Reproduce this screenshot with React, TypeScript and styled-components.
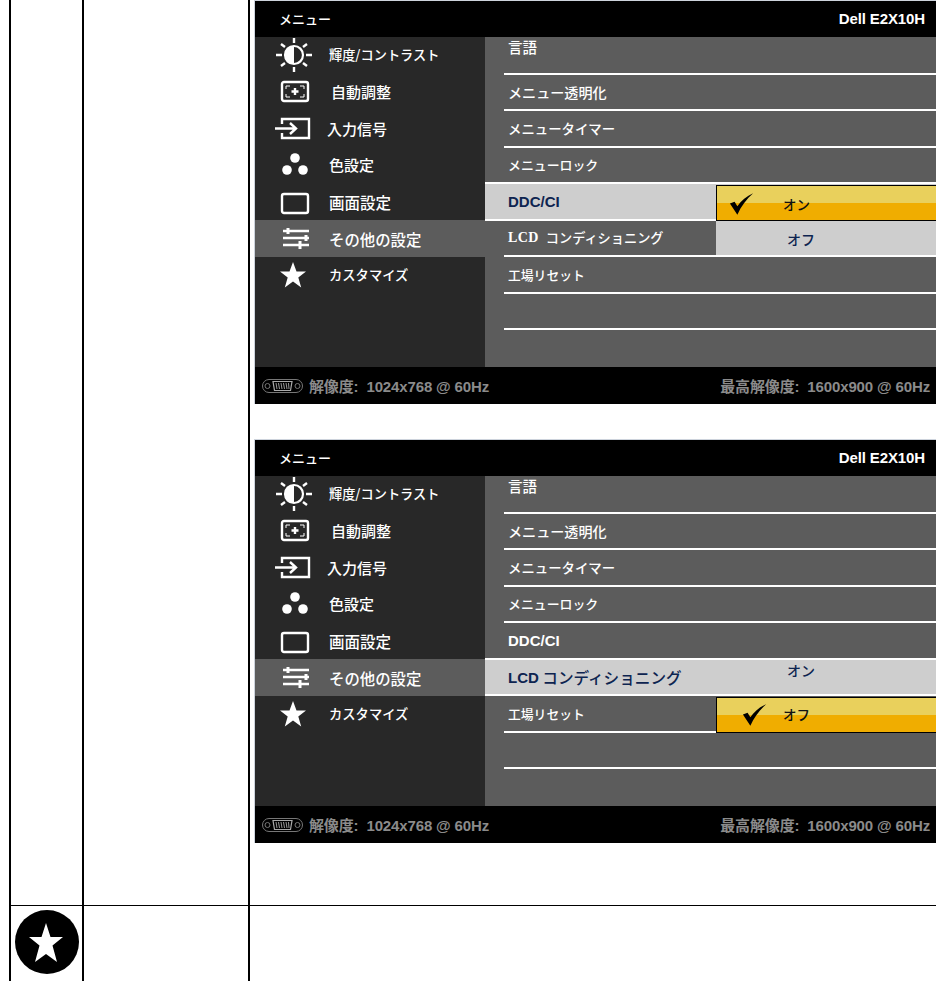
import React from "react";
import styled, { createGlobalStyle } from "styled-components";

const Global = createGlobalStyle`
  html, body { margin: 0; padding: 0; background: #fff; height: 981px; overflow: hidden; }
`;
const Table = styled.div`
  display: grid;
  grid-template-columns: 73px 166px 1fr;
  grid-template-rows: 905px 76px;
  margin-left: 9px;
  width: 927px;
  height: 981px;
`;
const Cell = styled.div<{ $bottom?: boolean }>`
  border-left: 2px solid #000;
  border-top: ${p => (p.$bottom ? "1px solid #000" : "none")};
  min-width: 0;
  overflow: hidden;
`;
const OsdStack = styled.div`
  padding-left: 4px;
  display: flex;
  flex-direction: column;
  gap: 35px;
`;
const BadgeCell = styled(Cell)`
  padding: 4px 0 0 4px;
`;
const Osd = styled.div`
  width: 682px;
  height: 404px;
  box-sizing: border-box;
  border-top: 1px solid #cdd3dc;
  border-left: 1px solid #cdd3dc;
  display: grid;
  grid-template-rows: 36px 330px 37px;
  background: #000;
`;
const Header = styled.div`
  display: flex;
  align-items: center;
  justify-content: space-between;
  padding: 0 11px 2px 24px;
  color: #fff;
`;
const HeaderTitle = styled.span`
  font: 500 13px "Noto Sans CJK JP", sans-serif;
`;
const Model = styled.span`
  font: 700 15px "Liberation Sans", sans-serif;
  letter-spacing: -0.12px;
`;
const Body = styled.div`
  display: grid;
  grid-template-columns: 230px 1fr;
  min-height: 0;
`;
const Sidebar = styled.div`
  background: #282828;
  display: grid;
  grid-template-rows: repeat(9, minmax(0, 1fr));
  min-height: 0;
`;
const SideItem = styled.div<{ $active?: boolean }>`
  display: grid;
  grid-template-columns: 74px 1fr;
  align-items: center;
  min-height: 0;
  background: ${p => (p.$active ? "#5c5c5c" : "transparent")};
`;
const IconSlot = styled.div<{ $shift: number }>`
  display: flex;
  justify-content: center;
  align-items: center;
  margin-left: ${p => p.$shift}px;
  svg { display: block; }
`;
const SideText = styled.span<{ $dx: number; $w: number }>`
  margin-left: ${p => p.$dx}px;
  color: #fff;
  font: 500 ${p => p.$w}px/20px "Noto Sans CJK JP", sans-serif;
  white-space: nowrap;
`;
const Pane = styled.div`
  background: #5c5c5c;
  display: grid;
  grid-template-rows: repeat(9, minmax(0, 1fr));
  min-height: 0;
  padding-top: 1px;
`;
const Row = styled.div<{ $hl?: boolean; $noRule?: boolean }>`
  display: flex;
  min-height: 0;
  margin-left: ${p => (p.$hl ? 0 : 19)}px;
  padding-left: ${p => (p.$hl ? 19 : 0)}px;
  background: ${p => (p.$hl ? "#cecece" : "transparent")};
  border-bottom: ${p => (p.$noRule ? "none" : "2px solid #fff")};
  box-shadow: ${p => (p.$hl ? "0 -2px 0 #fff" : "none")};
  position: relative;
`;
const Label = styled.div<{ $hl?: boolean; $top?: boolean; $size?: number }>`
  width: 212px;
  flex: none;
  padding-left: 4px;
  padding-bottom: ${p => (p.$top ? 16 : 0)}px;
  box-sizing: border-box;
  display: flex;
  align-items: center;
  white-space: nowrap;
  color: ${p => (p.$hl ? "#0d2450" : "#fff")};
  font: 500 ${p => p.$size ?? 14}px/20px "Noto Sans CJK JP", sans-serif;
`;
const LatinBold = styled.span`
  font: 700 15px "Liberation Sans", sans-serif;
`;
const LatinSerif = styled.span`
  font: 700 14px "Liberation Serif", serif;
  letter-spacing: 0.4px;
  margin-right: 7px;
`;
const Chosen = styled.div`
  flex: 1;
  margin: 1px 0 -2px;
  box-sizing: border-box;
  border: 1px solid #000;
  border-right: none;
  background: linear-gradient(#e9d05c 0 50%, #f0ad00 50% 100%);
  color: #111;
  font: 500 13.5px "Noto Sans CJK JP", sans-serif;
  position: relative;
`;
const ChosenText = styled.span<{ $y: number }>`
  position: absolute;
  left: 66px;
  top: ${p => p.$y}px;
  line-height: 20px;
`;
const CheckMark = styled.svg<{ $x: number; $y: number }>`
  position: absolute;
  left: ${p => p.$x}px;
  top: ${p => p.$y}px;
`;
const Other = styled.div<{ $offsetTop?: number }>`
  flex: 1;
  background: #cecece;
  color: #0d2450;
  padding: ${p => p.$offsetTop ?? 8}px 0 0 71px;
  font: 500 14px/20px "Noto Sans CJK JP", sans-serif;
`;
const Footer = styled.div`
  display: flex;
  align-items: center;
  justify-content: space-between;
  padding: 0 6px 0 7px;
  color: #8b8b8b;
  font: 700 15px "Liberation Sans", "Noto Sans CJK JP", sans-serif;
  letter-spacing: -0.14px;
`;
const FooterLeft = styled.span`
  display: flex;
  align-items: center;
  gap: 6px;
`;
const FooterKey = styled.span`
  margin-right: 4px;
`;
const Badge = styled.svg`
  display: block;
`;

const Ic = { fill: "none", stroke: "#fff", strokeWidth: 2.4 };
const Sun = () => (
  <svg width="38" height="36" viewBox="0 0 38 36">
    <circle cx="19" cy="18" r="9" fill="#282828" stroke="#fff" strokeWidth="2.2" />
    <path d="M19 9a9 9 0 0 0 0 18z" fill="#fff" />
    <path d="M19 1v5M19 30v5M1 18h6M31 18h6M6 7l4 3M32 7l-4 3M6 29l4-3M32 29l-4-3" {...Ic} />
  </svg>
);
const Auto = () => (
  <svg width="30" height="24" viewBox="0 0 30 24">
    <rect x="2" y="2" width="26" height="19" rx="2" {...Ic} />
    <path d="M6 9V6h4M20 6h4v3M6 14v3h4M20 17h4v-3" fill="none" stroke="#fff" />
    <path d="M15 8v7M11.500 11.500h7" {...Ic} />
  </svg>
);
const Input = () => (
  <svg width="36" height="24" viewBox="0 0 36 24">
    <path d="M7 7V2h27v19H7v-5" {...Ic} />
    <path d="M0 11.500h21M15 6l6 5.500-6 5.500" {...Ic} />
  </svg>
);
const Dots = () => (
  <svg width="28" height="24" viewBox="0 0 28 24">
    <circle cx="14" cy="5" r="4.800" fill="#fff" />
    <circle cx="6" cy="17" r="4.800" fill="#fff" />
    <circle cx="22" cy="17" r="4.800" fill="#fff" />
  </svg>
);
const Screen = () => (
  <svg width="30" height="28" viewBox="0 0 30 28">
    <rect x="2" y="6" width="26" height="19" rx="2" {...Ic} />
  </svg>
);
const Sliders = () => (
  <svg width="28" height="24" viewBox="0 0 28 24">
    <path d="M1 4h26M1 11h26M1 18h26" fill="none" stroke="#fff" strokeWidth="2.6" />
    <path d="M6 1v6M24 8v6M18 14v8" fill="none" stroke="#fff" strokeWidth="3" />
  </svg>
);
const StarIc = () => (
  <svg width="28" height="28" viewBox="0 0 28 28">
    <path d="M14 1l3.500 9.500H27l-7.700 6 2.900 10L14 20.500 5.800 26.500l2.900-10L1 10.500h9.500z" fill="#fff" />
  </svg>
);
const Vga = () => (
  <svg width="41" height="16" viewBox="0 0 41 16">
    <rect x="0.500" y="1.500" width="40" height="13" rx="6.500" fill="none" stroke="#777" />
    <circle cx="5.500" cy="8" r="2.500" fill="none" stroke="#777" />
    <circle cx="35.500" cy="8" r="2.500" fill="none" stroke="#777" />
    <path d="M11 3.500h19l-1.500 9h-16z" fill="#000" stroke="#aaa" strokeWidth="1.200" />
    <path d="M14 5l1 6M16.500 5l1 6M19 5l1 6M21.500 5l1 6M24 5l1 6M26.500 5l.5 6" stroke="#999" />
  </svg>
);
const Check = ({ x, y }: { x: number; y: number }) => (
  <CheckMark $x={x} $y={y} width="26" height="23" viewBox="0 0 28 24">
    <path d="M1 12l5-2 3 5C13 9 19 4 26 1 19 7 13 15 9 24z" fill="#000" />
  </CheckMark>
);

const items: [React.ReactNode, string, number, number, number][] = [
  [<Sun />, "輝度/コントラスト", 0, 13.2, 4],
  [<Auto />, "自動調整", 2, 15, 6],
  [<Input />, "入力信号", -2, 15, 2],
  [<Dots />, "色設定", 0, 15, 6],
  [<Screen />, "画面設定", 0, 15.5, 6],
  [<Sliders />, "その他の設定", 0, 15.4, 8],
  [<StarIc />, "カスタマイズ", 0, 13.3, 2],
];

const Menu = () => (
  <Sidebar>
    {items.map(([icon, text, dx, w, shift], i) => (
      <SideItem key={text} $active={i === 5}>
        <IconSlot $shift={shift}>{icon}</IconSlot>
        <SideText $dx={dx} $w={w}>{text}</SideText>
      </SideItem>
    ))}
  </Sidebar>
);

const Top = ({ children }: { children: React.ReactNode }) => (
  <Osd>
    <Header>
      <HeaderTitle>メニュー</HeaderTitle>
      <Model>Dell E2X10H</Model>
    </Header>
    <Body>
      <Menu />
      <Pane>{children}</Pane>
    </Body>
    <Footer>
      <FooterLeft>
        <Vga />
        <span><FooterKey>解像度:</FooterKey> 1024x768 @ 60Hz</span>
      </FooterLeft>
      <span><FooterKey>最高解像度:</FooterKey> 1600x900 @ 60Hz</span>
    </Footer>
  </Osd>
);

const CommonTop = () => (
  <>
    <Row><Label $top $size={14.5}>言語</Label></Row>
    <Row><Label $size={14.1}>メニュー透明化</Label></Row>
    <Row><Label $size={13.4}>メニュータイマー</Label></Row>
    <Row><Label $size={12.9}>メニューロック</Label></Row>
  </>
);

export default function App() {
  return (
    <>
      <Global />
      <Table>
        <Cell />
        <Cell />
        <Cell>
          <OsdStack>
            <Top>
              <CommonTop />
              <Row $hl>
                <Label $hl><LatinBold>DDC/CI</LatinBold></Label>
                <Chosen>
                  <Check x={12} y={6} />
                  <ChosenText $y={8}>オン</ChosenText>
                </Chosen>
              </Row>
              <Row>
                <Label $size={13.2}><LatinSerif>LCD</LatinSerif>コンディショニング</Label>
                <Other>オフ</Other>
              </Row>
              <Row><Label $size={12.8}>工場リセット</Label></Row>
              <Row />
              <Row $noRule />
            </Top>
            <Top>
              <CommonTop />
              <Row><Label><LatinBold>DDC/CI</LatinBold></Label></Row>
              <Row $hl>
                <Label $hl $size={15.6}><LatinBold>LCD</LatinBold>&nbsp;コンディショニング</Label>
                <Other $offsetTop={0}>オン</Other>
              </Row>
              <Row>
                <Label $size={12.8}>工場リセット</Label>
                <Chosen>
                  <Check x={25} y={5} />
                  <ChosenText $y={6}>オフ</ChosenText>
                </Chosen>
              </Row>
              <Row />
              <Row $noRule />
            </Top>
          </OsdStack>
        </Cell>
        <BadgeCell $bottom>
          <Badge width="64" height="64" viewBox="0 0 64 64">
            <circle cx="32" cy="32" r="32" fill="#000" />
            <path d="M31 13l4.500 14H48l-10.500 8.500L42 52l-11-8-11 8 4.500-16.500L14 27h12.500z" fill="#fff" />
          </Badge>
        </BadgeCell>
        <Cell $bottom />
        <Cell $bottom />
      </Table>
    </>
  );
}
